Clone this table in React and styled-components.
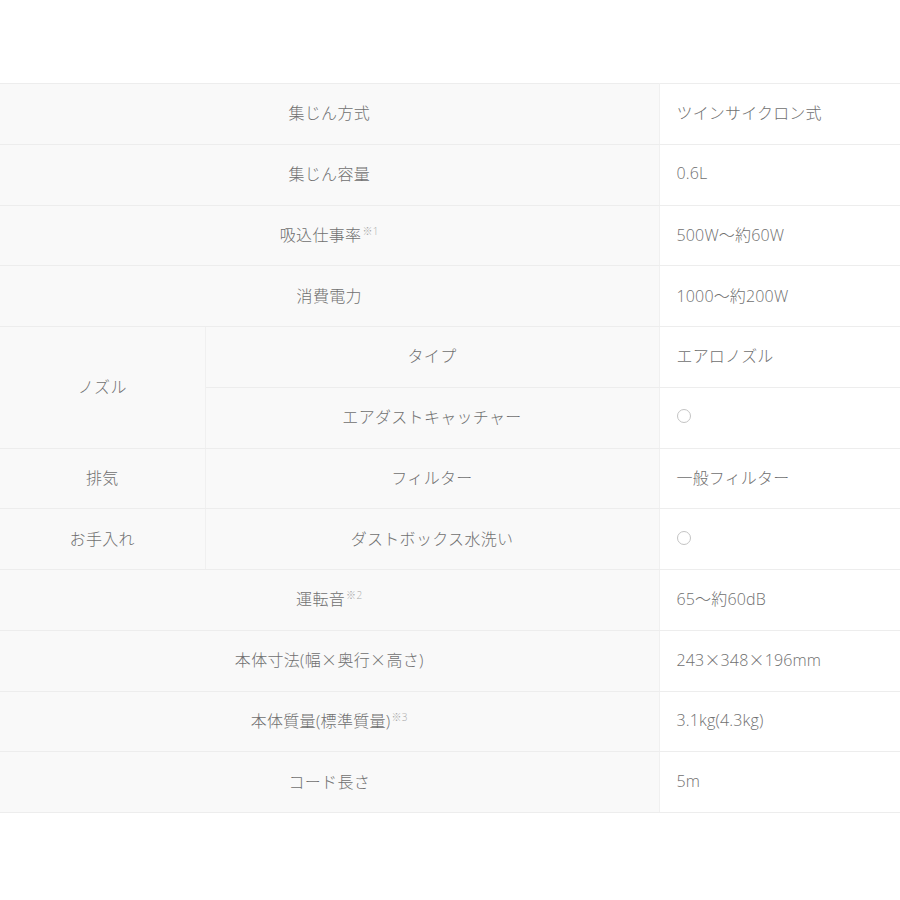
import React from "react";
import styled, { createGlobalStyle } from "styled-components";

const GlobalStyle = createGlobalStyle`
	html, body {
		margin: 0;
		padding: 0;
		background: #ffffff;
	}
	body {
		font-family: "Open Sans", "Noto Sans CJK JP", sans-serif;
		font-weight: 300;
		color: #707070;
	}
`;

const Page = styled.div`
	width: 900px;
	padding-top: 83px;
`;

const SpecTable = styled.table`
	width: 900px;
	border-collapse: collapse;
	table-layout: fixed;
	border-top: 1px solid #ededed;
	border-bottom: 1px solid #ededed;
`;

const Row = styled.tr`
	height: 60.75px;
	border-bottom: 1px solid #ededed;
`;

const Label = styled.th`
	background: #f9f9f9;
	font-weight: 300;
	font-size: 16px;
	color: #707070;
	text-align: center;
	padding: 0 0 3px;
	letter-spacing: 0.02em;
	border-right: 1px solid #f0f0f0;
	border-bottom: 1px solid #ededed;
`;

const Value = styled.td`
	background: #ffffff;
	font-size: 16px;
	color: #707070;
	padding: 0 0 3px 17px;
	text-align: left;
	letter-spacing: 0.01em;
	border-bottom: 1px solid #ededed;
`;

const Cross = styled.span`
	font-family: "Noto Sans CJK JP", sans-serif;
	font-weight: 300;
`;

const Note = styled.sup`
	font-size: 10px;
	color: #aaaaaa;
	vertical-align: 6px;
	line-height: 0;
	margin-left: 1px;
`;

const Circle = styled.span`
	display: inline-block;
	width: 12px;
	height: 12px;
	border: 1px solid #c4c4c4;
	border-radius: 50%;
	vertical-align: middle;
	margin-top: -3px;
`;

const specs = [
	{ label: "集じん方式", value: "ツインサイクロン式" },
	{ label: "集じん容量", value: "0.6L" },
	{ label: "吸込仕事率", note: "※1", value: "500W〜約60W" },
	{ label: "消費電力", value: "1000〜約200W" },
	{ group: "ノズル", span: 2, label: "タイプ", value: "エアロノズル" },
	{ label: "エアダストキャッチャー", circle: true, sub: true },
	{ group: "排気", span: 1, label: "フィルター", value: "一般フィルター" },
	{ group: "お手入れ", span: 1, label: "ダストボックス水洗い", circle: true },
	{ label: "運転音", note: "※2", value: "65〜約60dB" },
	{ label: "本体寸法(幅×奥行×高さ)", value: "243×348×196mm" },
	{ label: "本体質量(標準質量)", note: "※3", value: "3.1kg(4.3kg)" },
	{ label: "コード長さ", value: "5m" },
];

// × を和文フォントで表示
const withCross = (text) =>
	text.split("×").flatMap((part, i) =>
		i === 0 ? [part] : [<Cross key={i}>×</Cross>, part]
	);

const App = () => {
	return (
		<>
			<GlobalStyle />
			<Page>
				<SpecTable>
					<colgroup>
						<col style={{ width: 205 }} />
						<col style={{ width: 454 }} />
						<col style={{ width: 241 }} />
					</colgroup>
					<tbody>
						{specs.map((item, i) => {
							const nested = item.group || item.sub;
							return (
								<Row key={i}>
									{item.group && (
										<Label rowSpan={item.span}>{item.group}</Label>
									)}
									<Label colSpan={nested ? 1 : 2}>
										{withCross(item.label)}
										{item.note && <Note>{item.note}</Note>}
									</Label>
									<Value>
										{item.circle ? <Circle /> : withCross(item.value)}
									</Value>
								</Row>
							);
						})}
					</tbody>
				</SpecTable>
			</Page>
		</>
	);
};

export default App;
